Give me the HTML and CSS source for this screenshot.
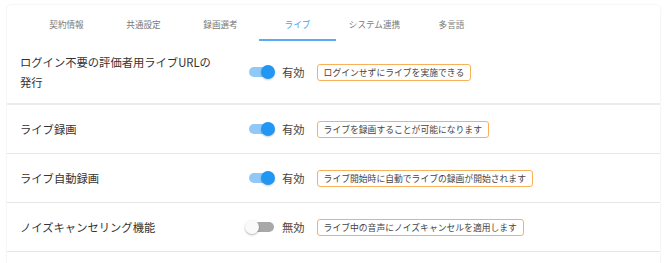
FILE: index.html
```html
<!DOCTYPE html>
<html lang="ja">
<head>
<meta charset="utf-8">
<link rel="stylesheet" href="styles.css">
</head>
<body>
<div class="card">
  <div class="tabs">
    <div class="tab">契約情報</div>
    <div class="tab">共通設定</div>
    <div class="tab">録画選考</div>
    <div class="tab active">ライブ</div>
    <div class="tab">システム連携</div>
    <div class="tab">多言語</div>
  </div>
  <div class="row first">
    <div class="label">ログイン不要の評価者用ライブURLの発行</div>
    <div class="control">
      <span class="switch on"><span class="track"></span><span class="thumb"></span></span>
      <span class="state">有効</span>
      <span class="badge">ログインせずにライブを実施できる</span>
    </div>
  </div>
  <div class="row">
    <div class="label">ライブ録画</div>
    <div class="control">
      <span class="switch on"><span class="track"></span><span class="thumb"></span></span>
      <span class="state">有効</span>
      <span class="badge">ライブを録画することが可能になります</span>
    </div>
  </div>
  <div class="row">
    <div class="label">ライブ自動録画</div>
    <div class="control">
      <span class="switch on"><span class="track"></span><span class="thumb"></span></span>
      <span class="state">有効</span>
      <span class="badge">ライブ開始時に自動でライブの録画が開始されます</span>
    </div>
  </div>
  <div class="row">
    <div class="label">ノイズキャンセリング機能</div>
    <div class="control">
      <span class="switch off"><span class="track"></span><span class="thumb"></span></span>
      <span class="state">無効</span>
      <span class="badge">ライブ中の音声にノイズキャンセルを適用します</span>
    </div>
  </div>
  <div class="row"></div>
</div>
</body>
</html>
```

FILE: styles.css
```css
html, body {
  margin: 0;
  padding: 0;
  background: #ffffff;
  font-family: "Noto Sans CJK JP", "Noto Sans", sans-serif;
  color: #333333;
  overflow: hidden;
}

.card {
  margin: 5px 0 0 7px;
  width: 653px;
  background: #ffffff;
  border-radius: 4px 4px 0 0;
  box-shadow: 0 0 2px rgba(0, 0, 0, 0.12);
}

.tabs {
  display: flex;
  height: 36px;
  padding-left: 21px;
}

.tab {
  width: 77px;
  display: flex;
  align-items: center;
  justify-content: center;
  font-size: 8.6px;
  color: #7a7a7a;
  box-sizing: border-box;
  padding-top: 1px;
}

.tab.active {
  color: #4aa3f0;
  border-bottom: 2px solid #5aabf0;
  padding-top: 3px;
}

.row {
  display: flex;
  align-items: center;
  min-height: 49px;
  padding: 11px 0;
  box-sizing: border-box;
  border-bottom: 1px solid #e6e6e6;
}

.row.first {
  min-height: 62px;
  border-bottom: 2px solid #ececec;
}

.label {
  flex: none;
  width: 202px;
  padding-left: 13px;
  padding-right: 26px;
  font-size: 11.3px;
  line-height: 20px;
  color: #333333;
}

.control {
  display: flex;
  align-items: center;
}

.switch {
  position: relative;
  width: 28px;
  height: 14px;
  margin-right: 6px;
}

.switch .track {
  position: absolute;
  left: 1px;
  top: 2px;
  width: 25px;
  height: 10px;
  border-radius: 5px;
}

.switch .thumb {
  position: absolute;
  top: 0;
  width: 14px;
  height: 14px;
  border-radius: 50%;
}

.switch.on .track {
  background: #90c8f8;
}

.switch.on .thumb {
  left: 13px;
  background: #2196f3;
  box-shadow: 0 1px 2px rgba(0, 0, 0, 0.2);
}

.switch.off .track {
  background: #a8a8a8;
}

.switch.off .thumb {
  left: -3px;
  background: #fafafa;
  box-shadow: 0 1px 2px rgba(0, 0, 0, 0.3);
}

.state {
  font-size: 11.3px;
  color: #444444;
  margin-right: 12px;
}

.badge {
  font-size: 8.8px;
  line-height: 13px;
  color: #444444;
  border: 1px solid #f8b15a;
  border-radius: 3px;
  padding: 1px 6px;
  white-space: nowrap;
}
```
